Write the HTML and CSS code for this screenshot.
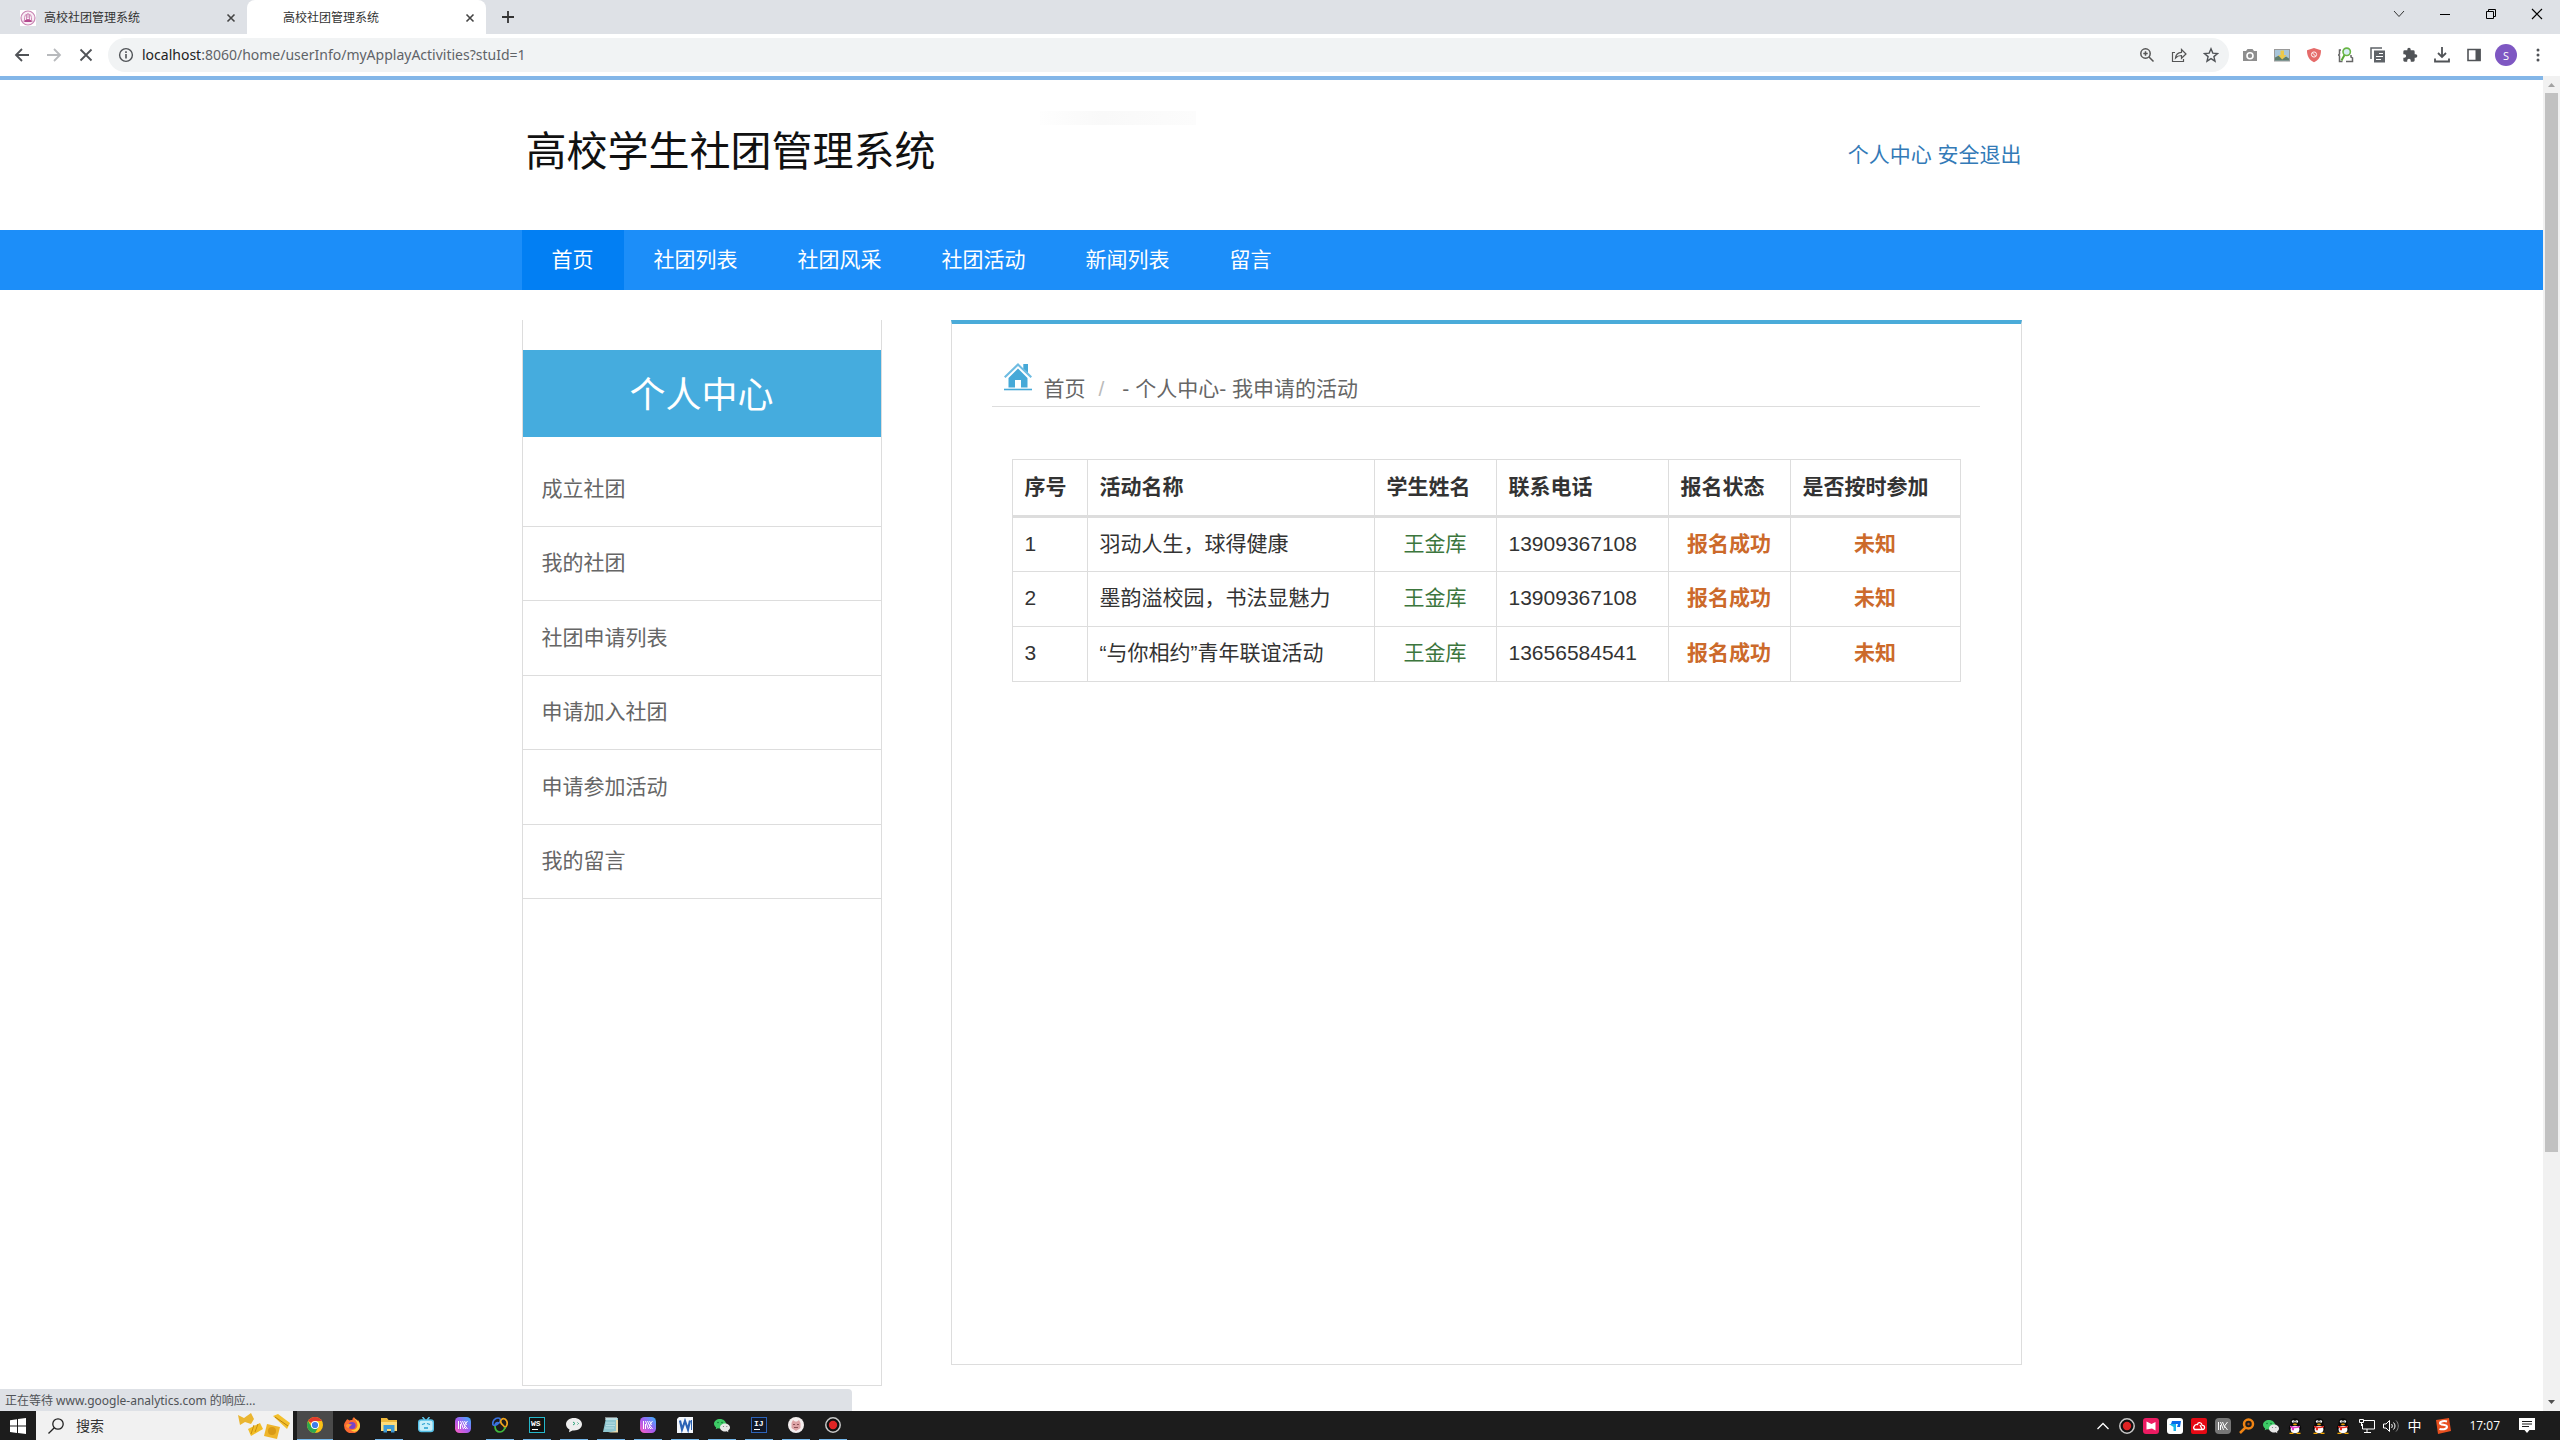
FILE: index.html
```html
<!DOCTYPE html>
<html lang="zh-CN">
<head>
<meta charset="utf-8">
<title>高校社团管理系统</title>
<link rel="stylesheet" href="styles.css">
</head>
<body>
<svg class="defs" aria-hidden="true">
  <symbol id="x" viewBox="0 0 10 10"><path d="M1.500 1.500l7 7M8.500 1.500l-7 7" stroke="currentColor" stroke-width="1.600"/></symbol>
  <symbol id="rec" viewBox="0 0 16 16"><circle cx="8" cy="8" r="7.200" fill="#111" stroke="#c8c8c8" stroke-width="1.500"/><circle cx="8" cy="8" r="4.200" fill="#e02424"/></symbol>
  <symbol id="maze" viewBox="0 0 16 16"><rect width="16" height="16" rx="4.500" fill="url(#gm)"/><path d="M3.500 4v8M5.500 4l3 8M5.500 7v5M7.500 4l2.500 6M9.500 4l2 4M12.500 4l-3 4 3 4M11 12l-2-2" stroke="#fff" fill="none"/></symbol>
  <symbol id="wechat" viewBox="0 0 16 16"><path d="M6 2C2.700 2 0 4.100 0 6.800c0 1.500.9 2.800 2.200 3.700L1.700 12.300 3.900 11.200c.7.200 1.400.3 2.100.3 3.300 0 6-2.100 6-4.700S9.300 2 6 2z" fill="#3ecb66"/><path d="M11 6.500c-2.800 0-5 1.800-5 4s2.200 4 5 4c.6 0 1.200-.1 1.700-.2l1.700.9-.4-1.500c1.200-.7 2-1.900 2-3.200 0-2.200-2.200-4-5-4z" fill="#e8e8e8"/><circle cx="4" cy="5.500" r=".8" fill="#14793a"/><circle cx="8" cy="5.500" r=".8" fill="#14793a"/><circle cx="9.500" cy="9.500" r=".6" fill="#777"/><circle cx="12.800" cy="9.500" r=".6" fill="#777"/></symbol>
  <symbol id="qq" viewBox="0 0 16 16"><ellipse cx="8" cy="10" rx="6.200" ry="5" fill="#080808"/><ellipse cx="8" cy="5" rx="4.600" ry="4.800" fill="#080808"/><ellipse cx="8" cy="11.500" rx="4.400" ry="3.700" fill="#fff"/><circle cx="6.300" cy="3.600" r="1.400" fill="#fff"/><circle cx="9.700" cy="3.600" r="1.400" fill="#fff"/><circle cx="6.500" cy="4" r=".5"/><circle cx="9.500" cy="4" r=".5"/><ellipse cx="8" cy="6.200" rx="2.200" ry=".7" fill="#f5a600"/><path d="M3 7.800c3 1.400 7 1.400 10 0v1.400c-2 .9-4 1.100-6 1v2H4.800V9.900L3 9.200z" fill="currentColor"/><path d="M2.500 15.300h4M9.500 15.300h4" stroke="#f5a600" stroke-width="1.200"/></symbol>
  <linearGradient id="gm" x1="0" y1="1" x2="1" y2="0"><stop stop-color="#ff5fc0"/><stop offset=".5" stop-color="#a35cf0"/><stop offset="1" stop-color="#35b8ff"/></linearGradient>
</svg>

<header class="browser">
  <div class="tabstrip">
    <div class="tab">
      <svg class="i16" viewBox="0 0 16 16"><rect width="16" height="16" fill="#fff"/><circle cx="8" cy="8" r="7" fill="#f9eef5" stroke="#c987b4" stroke-width="1.200"/><path d="M4.500 10V7.500a3.500 3.500 0 017 0V10M6.500 10V5M9.500 10V5M8 3v5" stroke="#cf8fb9" fill="none"/><path d="M3 11l5-2 5 2-2 1H5z" fill="#b4498f"/></svg>
      <span class="tab-title">高校社团管理系统</span>
      <button class="tab-close" aria-label="关闭标签页"><svg class="i10"><use href="#x"/></svg></button>
    </div>
    <div class="tab tab-active">
      <span class="i16"></span>
      <span class="tab-title">高校社团管理系统</span>
      <button class="tab-close" aria-label="关闭标签页"><svg class="i10"><use href="#x"/></svg></button>
    </div>
    <button class="new-tab" aria-label="新标签页"><svg class="i16" viewBox="0 0 16 16"><path d="M8 2v12M2 8h12" stroke="#333" stroke-width="1.800"/></svg></button>
    <div class="window-controls">
      <button aria-label="搜索标签页"><svg class="i16" viewBox="0 0 16 16"><path d="M3 5l5 5.500L13 5" stroke="#333" fill="none"/></svg></button>
      <button aria-label="最小化"><svg class="i16" viewBox="0 0 16 16"><path d="M3 8.500h10" stroke="#000"/></svg></button>
      <button aria-label="还原"><svg class="i16" viewBox="0 0 16 16"><path d="M3.500 5.500h7v7h-7zM5.500 5V3.500h7v7H11" stroke="#000" fill="none"/></svg></button>
      <button aria-label="关闭"><svg class="i16" viewBox="0 0 16 16"><path d="M3 3l10 10M13 3L3 13" stroke="#000" stroke-width="1.200"/></svg></button>
    </div>
  </div>
  <div class="toolbar">
    <div class="history">
      <button aria-label="后退"><svg class="i16" viewBox="0 0 16 16"><path d="M15 8H2M8 2L2 8l6 6" stroke="#505357" stroke-width="1.800" fill="none"/></svg></button>
      <button aria-label="前进"><svg class="i16" viewBox="0 0 16 16"><path d="M1 8h13M8 2l6 6-6 6" stroke="#b8babd" stroke-width="1.800" fill="none"/></svg></button>
      <button aria-label="停止加载"><svg class="i16" viewBox="0 0 16 16"><path d="M2.500 2.500l11 11M13.500 2.500l-11 11" stroke="#505357" stroke-width="1.800"/></svg></button>
    </div>
    <div class="omnibox">
      <svg class="i16" viewBox="0 0 16 16"><circle cx="8" cy="8" r="6.400" fill="none" stroke="#505357" stroke-width="1.400"/><path d="M8 7v4.500M8 4.300v1.600" stroke="#505357" stroke-width="1.600"/></svg>
      <label class="address"><span class="host">localhost</span><input type="text" aria-label="地址" value=":8060/home/userInfo/myApplayActivities?stuId=1"></label>
      <div class="page-actions">
        <button aria-label="缩放"><svg class="i16" viewBox="0 0 16 16"><circle cx="6.500" cy="6.500" r="4.700" fill="none" stroke="#555" stroke-width="1.500"/><path d="M10 10l4.500 4.500M4.300 6.500h4.400M6.500 4.300v4.400" stroke="#555" stroke-width="1.500"/></svg></button>
        <button aria-label="分享"><svg class="i16" viewBox="0 0 16 16"><path d="M4 5.500H1.500v9h11V12M4.500 11c.3-3.500 2.300-5.500 6-5.700V2.500L15 7l-4.500 4.300V8.500C8 8.500 6 9.200 4.500 11z" fill="none" stroke="#555" stroke-width="1.200"/></svg></button>
        <button aria-label="收藏"><svg class="i16" viewBox="0 0 16 16"><path d="M8 1.800l1.800 4.300 4.700.4-3.600 3.100 1.100 4.600L8 11.700l-4 2.500 1.100-4.600-3.600-3.100 4.700-.4z" fill="none" stroke="#505357" stroke-width="1.400"/></svg></button>
      </div>
    </div>
    <div class="extensions">
      <button aria-label="截图"><svg class="i16" viewBox="0 0 16 16"><path d="M1 4h3l1.500-2h5L12 4h3v10H1z" fill="#8e8e8e"/><circle cx="8" cy="8.800" r="3" fill="#8e8e8e" stroke="#fff" stroke-width="1.600"/></svg></button>
      <button aria-label="图片下载"><svg class="i16" viewBox="0 0 16 16"><rect y="2" width="16" height="12.500" fill="#9a9a9a"/><rect x="1" y="3" width="14" height="10.500" fill="#a9c6da"/><path d="M1 10.500l4-2 4 3 3-2 3 2v2H1z" fill="#5f7d6c"/><path d="M6.500 3.500h3.500V8h2.500l-4.300 4.500L4 8h2.500z" fill="#ecc94a"/></svg></button>
      <button aria-label="拦截器"><svg class="i16" viewBox="0 0 16 16"><path d="M8 1l7 2.200c0 6-2 9.500-7 12-5-2.500-7-6-7-12z" fill="#e56b6a"/><circle cx="8" cy="7.500" r="2.600" fill="none" stroke="#fff" stroke-width=".9"/><path d="M6.500 6l3 3" stroke="#fff" stroke-width=".9"/></svg></button>
      <button aria-label="查找"><svg class="i16" viewBox="0 0 16 16"><path d="M3 3H1.500v4L.5 8l1 1v5.500h3M13 8v2l1.500 1v3.500H8" fill="none" stroke="#666" stroke-width="1.500"/><path d="M6.500 8l-3 5.500" stroke="#59a637" stroke-width="2"/><circle cx="8.700" cy="4.800" r="3.700" fill="#d8edf5" stroke="#69b544" stroke-width="1.600"/></svg></button>
      <button aria-label="复制"><svg class="i16" viewBox="0 0 16 16"><path d="M1 12V1h11" fill="none" stroke="#5f6368" stroke-width="1.500"/><rect x="4" y="3.500" width="11" height="12" fill="#5f6368"/><path d="M9 6.500h4M6 9.500h7M6 12.500h5" stroke="#fff" stroke-width="1.200"/></svg></button>
      <button aria-label="扩展程序"><svg class="i16" viewBox="0 0 24 24"><path d="M20.500 11H19V7a2 2 0 00-2-2h-4V3.500a2.500 2.500 0 00-5 0V5H4a2 2 0 00-2 2v3.800h1.500a2.700 2.700 0 010 5.400H2V20c0 1.100.9 2 2 2h3.800v-1.500a2.700 2.700 0 015.400 0V22H17a2 2 0 002-2v-4h1.500a2.500 2.500 0 000-5z" fill="#505357"/></svg></button>
      <button aria-label="下载"><svg class="i16" viewBox="0 0 16 16"><path d="M8 0v9.500M4 6l4 4 4-4M1 11.500v3h14v-3" fill="none" stroke="#505357" stroke-width="1.800"/></svg></button>
      <button aria-label="侧边栏"><svg class="i16" viewBox="0 0 16 16"><path d="M2 2.500h12v11H2z" fill="none" stroke="#505357" stroke-width="1.600"/><path d="M9.500 2h5v12h-5z" fill="#505357"/></svg></button>
      <button class="avatar" aria-label="账号">S</button>
      <button aria-label="菜单"><svg class="i16" viewBox="0 0 16 16"><circle cx="8" cy="3" r="1.500" fill="#505357"/><circle cx="8" cy="8" r="1.500" fill="#505357"/><circle cx="8" cy="13" r="1.500" fill="#505357"/></svg></button>
    </div>
  </div>
</header>

<div class="viewport">
  <div class="page">
    <div class="site-header"><div class="container brand-row">
      <h1 class="brand">高校学生社团管理系统</h1>
      <div class="account"><a href="#">个人中心</a> <a href="#">安全退出</a></div>
    </div></div>
    <nav class="site-nav"><div class="container nav-row">
      <a class="current" href="#">首页</a><a href="#">社团列表</a><a href="#">社团风采</a><a href="#">社团活动</a><a href="#">新闻列表</a><a href="#">留言</a>
    </div></nav>
    <div class="container columns">
      <aside class="sidebar">
        <h2>个人中心</h2>
        <ul>
          <li><a href="#">成立社团</a></li><li><a href="#">我的社团</a></li><li><a href="#">社团申请列表</a></li><li><a href="#">申请加入社团</a></li><li><a href="#">申请参加活动</a></li><li><a href="#">我的留言</a></li>
        </ul>
      </aside>
      <main class="panel">
        <div class="crumbs">
          <svg class="home" viewBox="0 0 28 28"><path d="M14 0L0 13.500l1.500 1.500L14 3l12.500 12 1.500-1.500-4-4V1h-4.500v4.500z" fill="#6fbce2"/><path d="M14 5.500L4.500 15v9.500H11V17h6v7.500h6.500V15z" fill="#46a9d8"/><path d="M19.500 1H24v8.500l-4.500-4z" fill="#46a9d8"/><path d="M0 26.500h28" stroke="#46a9d8" stroke-width="1.600"/></svg>
          <a href="#">首页</a><span class="slash">/</span><span>- 个人中心- 我申请的活动</span>
        </div>
        <table>
          <colgroup><col class="c-no"><col class="c-name"><col class="c-student"><col class="c-phone"><col class="c-status"><col class="c-ontime"></colgroup>
          <thead><tr><th>序号</th><th>活动名称</th><th>学生姓名</th><th>联系电话</th><th>报名状态</th><th>是否按时参加</th></tr></thead>
          <tbody>
            <tr><td>1</td><td>羽动人生，球得健康</td><td class="student">王金库</td><td>13909367108</td><td class="state">报名成功</td><td class="state">未知</td></tr>
            <tr><td>2</td><td>墨韵溢校园，书法显魅力</td><td class="student">王金库</td><td>13909367108</td><td class="state">报名成功</td><td class="state">未知</td></tr>
            <tr><td>3</td><td>“与你相约”青年联谊活动</td><td class="student">王金库</td><td>13656584541</td><td class="state">报名成功</td><td class="state">未知</td></tr>
          </tbody>
        </table>
      </main>
    </div>
  </div>
  <div class="scrollbar">
    <svg viewBox="0 0 17 17"><path d="M5 11h7L8.500 7z" fill="#a3a3a3"/></svg>
    <div class="track"><div class="thumb"></div></div>
    <svg viewBox="0 0 17 17"><path d="M5 6h7l-3.500 4z" fill="#505050"/></svg>
  </div>
  <div class="status">正在等待 www.google-analytics.com 的响应...</div>
</div>

<footer class="taskbar">
  <button class="start" aria-label="开始"><svg class="i16" viewBox="0 0 16 16"><path d="M0 2.200l7-1v6.400H0zM8 1l8-1v7.600H8zM0 8.500h7V15l-7-1zM8 8.500h8V16l-8-1z" fill="#fff"/></svg></button>
  <label class="search">
    <svg class="i16" viewBox="0 0 16 16"><circle cx="10" cy="6" r="5.200" fill="none" stroke="#222" stroke-width="1.300"/><path d="M6.300 9.700L.5 15.500" stroke="#222" stroke-width="1.300"/></svg>
    <input type="text" placeholder="搜索" aria-label="搜索">
    <svg class="pasta" viewBox="0 0 54 28"><path d="M1 3l6 3 7-5 3 6-3 5-6-2-5 3z" fill="#eab530"/><path d="M11 17l12-6 3 6-12 7z" fill="#f1bd25"/><path d="M14 22l3-9M18 20l3-8" stroke="#c98f12"/><path d="M30 12l13 3-3 12-13-3z" fill="#efb52a"/><circle cx="35" cy="19" r="4" fill="#d99a17"/><path d="M36 4l5-2 12 9-3 6z" fill="#f3c02c"/><path d="M38 5l13 9" stroke="#b97e0f"/></svg>
  </label>
  <div class="apps">
    <button class="app focused open" aria-label="Chrome"><svg class="i16" viewBox="0 0 16 16"><circle cx="8" cy="8" r="8" fill="#fbc116"/><path d="M8 8L1.100 4A8 8 0 0114.900 4H8z" fill="#e33b2e"/><path d="M1.100 4A8 8 0 008 16l3.500-6L8 8 4.500 10z" fill="#2da94f"/><circle cx="8" cy="8" r="4" fill="#fff"/><circle cx="8" cy="8" r="3.100" fill="#3f7de8"/></svg></button>
    <button class="app" aria-label="Firefox"><svg class="i16" viewBox="0 0 16 16"><path d="M2.500 3C3.500 1.500 4 3 5.500 3.500 7 2.800 8 3 8.500 3 8 1.500 9.500.5 10 0c.3 1.500 3 2.300 3.500 4 .3-.4.300-1 .2-1.400C15.500 4.500 16 7 16 8.500A7.800 7.800 0 010 8.500C0 6 1.500 4.500 2.500 3z" fill="#fb6a32"/><path d="M10 1c.5 2 3.500 3 3.500 7.500C13 12 10 13.500 7 13c4 4 9.500 0 9-5C15.500 4 12 3 10 1z" fill="#ffce37"/><circle cx="8" cy="8.500" r="3.600" fill="#7844c8"/><path d="M2 8c2-2 4 0 6-1-1 2-3 2-3 4-2 0-3-1-3-3z" fill="#ff9635"/></svg></button>
    <button class="app open" aria-label="文件资源管理器"><svg class="i16" viewBox="0 0 16 16"><path d="M0 1h6l1.500 2H16v11H0z" fill="#f0b93b"/><path d="M0 5h16v9H0z" fill="#ffdc79"/><path d="M2.500 8h11v7.500H10V12H6v3.500H2.500z" fill="#3f9bd6"/></svg></button>
    <button class="app" aria-label="哔哩哔哩"><svg class="i16" viewBox="0 0 16 16"><path d="M4.500 0L7 3M11.500 0L9 3" stroke="#63c8ec" stroke-width="1.500"/><rect x=".7" y="3" width="14.600" height="11.500" rx="2.500" fill="#c9effa" stroke="#56c1e8" stroke-width="1.400"/><path d="M4 7.500l3-1M12 7.500l-3-1M6 11h4" stroke="#279fce" stroke-width="1.300"/></svg></button>
    <button class="app" aria-label="迷宫"><svg class="i16"><use href="#maze"/></svg></button>
    <button class="app open" aria-label="Navicat"><svg class="i16" viewBox="0 0 16 16" fill="none" stroke-width="1.700"><path d="M1 8C0 4 3 1 6 1c3 0 3 3 1 5C5 8 3 9 1 8M3 9c0-3 2-4 4-3" stroke="#3a73e0"/><path d="M9 6c-1-3 1-5 4-4 3 2 3 6 0 9-1-3-3-3-4-5" stroke="#f0a31c"/><path d="M3 9c0 4 2 6 5 6s5-3 5-5" stroke="#41b83d"/></svg></button>
    <button class="app open" aria-label="WebStorm"><svg class="i16" viewBox="0 0 16 16"><rect x=".5" y=".5" width="15" height="15" fill="#111" stroke="#25b7c9"/><text x="2" y="9" class="glyph">WS</text><path d="M3 12.500h6" stroke="#fff"/></svg></button>
    <button class="app open" aria-label="聊天"><svg class="i16" viewBox="0 0 16 16"><path d="M8 1c4.500 0 8 2.700 8 6.300s-3.500 6.200-8 6.200l-1.500-.1L3 15.300l.5-2.800C1.300 11.300 0 9.500 0 7.300 0 3.700 3.500 1 8 1z" fill="#eee"/><path d="M7 5l2 1.500L7 8M11.500 5.500l1 1-1 1" stroke="#2da279" fill="none"/></svg></button>
    <button class="app open" aria-label="记事本"><svg class="i16" viewBox="0 0 16 16"><path d="M3 1h12v14H0z" fill="#8fc7d0"/><path d="M13 3h2v12.500H5L13 14z" fill="#eadcae"/><path d="M3 0v3M5 0v3M7 0v3M9 0v3M11 0v3M13 0v3" stroke="#e9f3f4"/><path d="M3 6h9M3 8.500h9M2 11h9" stroke="#b9dfe4"/></svg></button>
    <button class="app open" aria-label="迷宫工具"><svg class="i16"><use href="#maze"/></svg></button>
    <button class="app open" aria-label="Word"><svg class="i16" viewBox="0 0 16 16"><path d="M2 0h14v16H0V2z" fill="#f4f7fc"/><rect x="14" y="3" width="1" height="10" fill="#2a62b5"/><path d="M3 3.500l2 9L8 4l3 8.500 2-9" stroke="#2a62b5" fill="none" stroke-width="2.200"/></svg></button>
    <button class="app open" aria-label="微信"><svg class="i16"><use href="#wechat"/></svg></button>
    <button class="app open" aria-label="IntelliJ IDEA"><svg class="i16" viewBox="0 0 16 16"><rect x=".5" y=".5" width="15" height="15" fill="#111726" stroke="#2d63b8"/><text x="3" y="9" class="glyph">IJ</text><path d="M3 12.500h6" stroke="#fff"/></svg></button>
    <button class="app open" aria-label="小猪"><svg class="i16" viewBox="0 0 16 16"><circle cx="8" cy="8" r="8" fill="#f4eeee"/><path d="M3.500 6L5 3l2 1.500h2L11 3l1.500 3v5L8 14l-4.500-3z" fill="#dda3a5"/><path d="M5 7.500h2M9 7.500h2M6 10.500h4" stroke="#8c5358"/></svg></button>
    <button class="app open" aria-label="录屏"><svg class="i16"><use href="#rec"/></svg></button>
  </div>
  <div class="tray">
    <svg class="i16" viewBox="0 0 16 16"><path d="M2.500 11L8 5.500l5.500 5.500" stroke="#fff" fill="none" stroke-width="1.300"/></svg>
    <svg class="i16"><use href="#rec"/></svg>
    <svg class="i16" viewBox="0 0 16 16"><rect width="16" height="16" rx="3" fill="#ec1b62"/><path d="M3.500 3.500l5 2.500 4-2v8.500l-3.500-2-5.500 1z" fill="#fff"/></svg>
    <svg class="i16" viewBox="0 0 16 16"><rect width="16" height="16" rx="3" fill="#fff"/><path d="M5 3h9l-1 6h-3l1-3H4z" fill="#0a6bea"/><path d="M2 6h7v7H6.500V9z" fill="#1bb5e9"/></svg>
    <svg class="i16" viewBox="0 0 16 16"><rect width="16" height="16" rx="2" fill="#e50914"/><path d="M3 11.500h8.500c3 0 2.500-4.500-.3-4.200C10.500 4 7 4 6.500 6.500 3 6 1 11.500 4.500 11.500M9 7l2 4" stroke="#fff" fill="none" stroke-width="1.300"/></svg>
    <svg class="i16" viewBox="0 0 16 16"><rect width="16" height="16" rx="4" fill="#777"/><path d="M3.500 4v8M5.500 4l3 8M5.500 7v5M7.500 4l2.500 6M12.500 4l-3 4 3 4" stroke="#fff" fill="none"/></svg>
    <svg class="i16" viewBox="0 0 16 16"><circle cx="9.500" cy="6" r="4.500" fill="none" stroke="#f18413" stroke-width="2.500"/><path d="M6.500 9.500L1 15" stroke="#f18413" stroke-width="2.500"/><circle cx="9.500" cy="6" r="1.200" fill="#a94b10"/></svg>
    <svg class="i16"><use href="#wechat"/></svg>
    <svg class="i16 qq-pink"><use href="#qq"/></svg>
    <svg class="i16 qq-red"><use href="#qq"/></svg>
    <svg class="i16 qq-red"><use href="#qq"/></svg>
    <svg class="i16" viewBox="0 0 16 16"><path d="M5 2.500h10.500v8.500h-12V6M8 11v3M5 14.500h7" stroke="#fff" fill="none"/><path d="M.5 1.500h4v3h-4zM2.500 4.500V8" stroke="#fff" fill="none"/></svg>
    <svg class="i16" viewBox="0 0 16 16"><path d="M.5 6v4H3l3.500 3.500v-11L3 6z" fill="none" stroke="#fff"/><path d="M8.500 6c1 1 1 3 0 4M10.500 4.500c2 2 2 5 0 7" stroke="#fff" fill="none"/><path d="M13 2.500c3 3 3 8 0 11" stroke="#888" fill="none"/></svg>
    <span class="ime">中</span>
    <svg class="i16 sogou" viewBox="0 0 16 16"><path d="M1 2l13-2 2 13-13 3z" fill="#e8501f"/><path d="M12 3.500c-2-.7-7-.5-7 1.700 0 2.300 7 .8 7 3.600 0 2.700-5.500 3-7.500 2" stroke="#fff" fill="none" stroke-width="2"/></svg>
    <time>17:07</time>
    <svg class="i16 notice" viewBox="0 0 16 16"><path d="M0 0h16v12h-5.500L8 15l-2.500-3H0z" fill="#fff"/><path d="M3 3.500h10M3 6h10M3 8.500h7" stroke="#1c1c1c"/></svg>
  </div>
</footer>
</body>
</html>
```
FILE: styles.css
```css
* { box-sizing: border-box; }
body {
  margin: 0;
  height: 100vh;
  display: flex;
  flex-direction: column;
  overflow: hidden;
  background: #fff;
  color: #333;
  font: 21px/30px "Liberation Sans", "Noto Sans CJK SC", sans-serif;
}
a { color: inherit; text-decoration: none; }
h1, h2, ul { margin: 0; padding: 0; font-weight: 400; list-style: none; }
button {
  display: flex;
  align-items: center;
  justify-content: center;
  padding: 0;
  border: 0;
  background: none;
  color: #444;
}
input { border: 0; padding: 0; background: none; outline: 0; font: inherit; min-width: 0; }
svg { display: block; flex: none; }
.defs { position: absolute; width: 0; height: 0; }
.i16 { width: 16px; height: 16px; flex: none; }
.i10 { width: 10px; height: 10px; }
.glyph { font: bold 8px "Liberation Mono", monospace; fill: #fff; }

/* browser frame */
.browser { font-family: "Noto Sans", "Noto Sans CJK SC", sans-serif; }
.tabstrip { display: flex; height: 34px; padding-left: 8px; background: #dee1e6; }
.tab {
  display: flex;
  align-items: center;
  gap: 8px;
  width: 239px;
  padding: 1px 11px 0 12px;
  color: #333;
  font-size: 12px;
}
.tab-active { border-radius: 8px 8px 0 0; background: #fff; }
.tab-title { flex: 1; }
.new-tab { width: 44px; }
.window-controls { display: flex; margin-left: auto; }
.window-controls button { width: 46px; height: 28px; }
.toolbar { display: flex; align-items: center; height: 42px; gap: 6px; }
.history { display: flex; gap: 16px; padding: 0 8px 0 14px; }
.omnibox {
  flex: 1;
  display: flex;
  align-items: center;
  gap: 8px;
  height: 34px;
  padding: 0 10px;
  border-radius: 17px;
  background: #f1f3f4;
}
.address { flex: 1; display: flex; font-size: 14px; }
.host { color: #222; }
.address input { flex: 1; color: #5f6368; }
.page-actions { display: flex; gap: 16px; }
.extensions { display: flex; align-items: center; gap: 16px; padding: 0 14px 0 7px; }
.avatar {
  width: 22px;
  height: 22px;
  margin: 0 -3px;
  border-radius: 50%;
  background: #7e57c2;
  color: #fff;
  font: 11px "Open Sans", sans-serif;
}

/* page */
.viewport { position: relative; flex: 1; min-height: 0; display: grid; grid-template-columns: 1fr 17px; }
.page { overflow: hidden; border-top: 4px solid #83b6e8; }
.container { width: 60%; min-width: 1000px; max-width: 1500px; margin: 0 auto; }
.brand-row {
  display: flex;
  justify-content: space-between;
  align-items: center;
  height: 150px;
  background: linear-gradient(90deg, #fefefe, #f9f9f9 40%, #fcfcfc) 518px 31px / 156px 14px no-repeat;
}
.brand { padding: 0 0 6px 4px; color: #111; font-size: 41px; line-height: 50px; }
.account { color: #337ab7; }
.site-nav { background: #1c8ef9; color: #fff; }
.nav-row { display: flex; }
.nav-row a { padding: 15px 30px; }
.nav-row .current { background: #027ff3; }
.columns { display: flex; justify-content: space-between; align-items: flex-start; padding-top: 30px; }
.sidebar {
  width: 24%;
  min-height: 1066px;
  padding-top: 30px;
  border: 1px solid #ddd;
  border-top: 0;
  color: #666;
}
.sidebar h2 { padding: 21px 0 16px; background: #45acde; color: #fff; font-size: 36px; line-height: 50px; text-align: center; }
.sidebar ul { display: grid; grid-auto-rows: 1fr; min-height: 447px; margin-top: 15px; }
.sidebar li { display: flex; align-items: center; padding-left: 19px; border-bottom: 1px solid #ddd; }
.panel {
  width: 1071px;
  min-height: 1045px;
  padding: 34px 41px 0 40px;
  border: 1px solid #ddd;
  border-top: 4px solid #4aabd9;
}
.crumbs { display: flex; align-items: flex-end; height: 49px; padding: 0 0 2px 12px; border-bottom: 1px solid #ddd; color: #666; }
.crumbs a { margin-left: 12px; }
.home { width: 28px; height: 28px; align-self: flex-start; margin-top: 5px; }
.slash { margin: 0 18px 0 13px; color: #bbb; }
table { width: 949px; margin: 52px 0 0 20px; border-collapse: collapse; table-layout: fixed; }
th, td { height: 55px; padding: 0 12px 2px; border: 1px solid #ddd; text-align: left; }
th { height: 57px; border-bottom-width: 3px; }
.c-no { width: 75px; }
.c-name { width: 287px; }
.c-student { width: 122px; }
.c-phone { width: 172px; }
.c-status { width: 122px; }
.student { color: #3c763d; text-align: center; }
.state { color: #cc6a2b; font-weight: 700; text-align: center; }

.scrollbar { display: flex; flex-direction: column; background: #f1f1f1; }
.scrollbar svg { width: 17px; height: 17px; }
.track { flex: 1; padding: 0 2px; }
.thumb { height: calc(81% + 5px); background: #c1c1c1; }
.status {
  position: absolute;
  left: 0;
  bottom: 0;
  width: 852px;
  height: 22px;
  padding-left: 5px;
  border-radius: 0 4px 0 0;
  background: #dee1e6;
  color: #505357;
  font: 12px/24px "Noto Sans", "Noto Sans CJK SC", sans-serif;
}

/* taskbar */
.taskbar {
  display: flex;
  height: 29px;
  background: #1c1c1c;
  color: #fff;
  font: 14px/29px "Open Sans", "Noto Sans CJK SC", sans-serif;
}
.start { width: 36px; }
.search { display: flex; align-items: center; gap: 12px; width: 257px; padding: 0 2px 0 12px; background: #f1f1f1; color: #222; }
.search input { flex: 1; }
.search input::placeholder { color: #333; opacity: 1; }
.pasta { width: 54px; height: 28px; }
.apps { display: flex; gap: 1px; margin-left: 4px; }
.app { width: 36px; border-bottom: 2px solid transparent; }
.open { background: linear-gradient(#76b9ed, #76b9ed) center bottom / 28px 1px no-repeat border-box; }
.focused { border-bottom: 1px solid #76b9ed; background: #4a4a4a; }
.tray { display: flex; align-items: center; gap: 8px; margin-left: auto; padding-right: 25px; }
.ime { width: 16px; }
.sogou { margin-left: 4px; }
time { margin: 0 11px 0 10px; font-size: 12px; }
.qq-pink { color: #e73bc8; }
.qq-red { color: #e62b22; }
```
